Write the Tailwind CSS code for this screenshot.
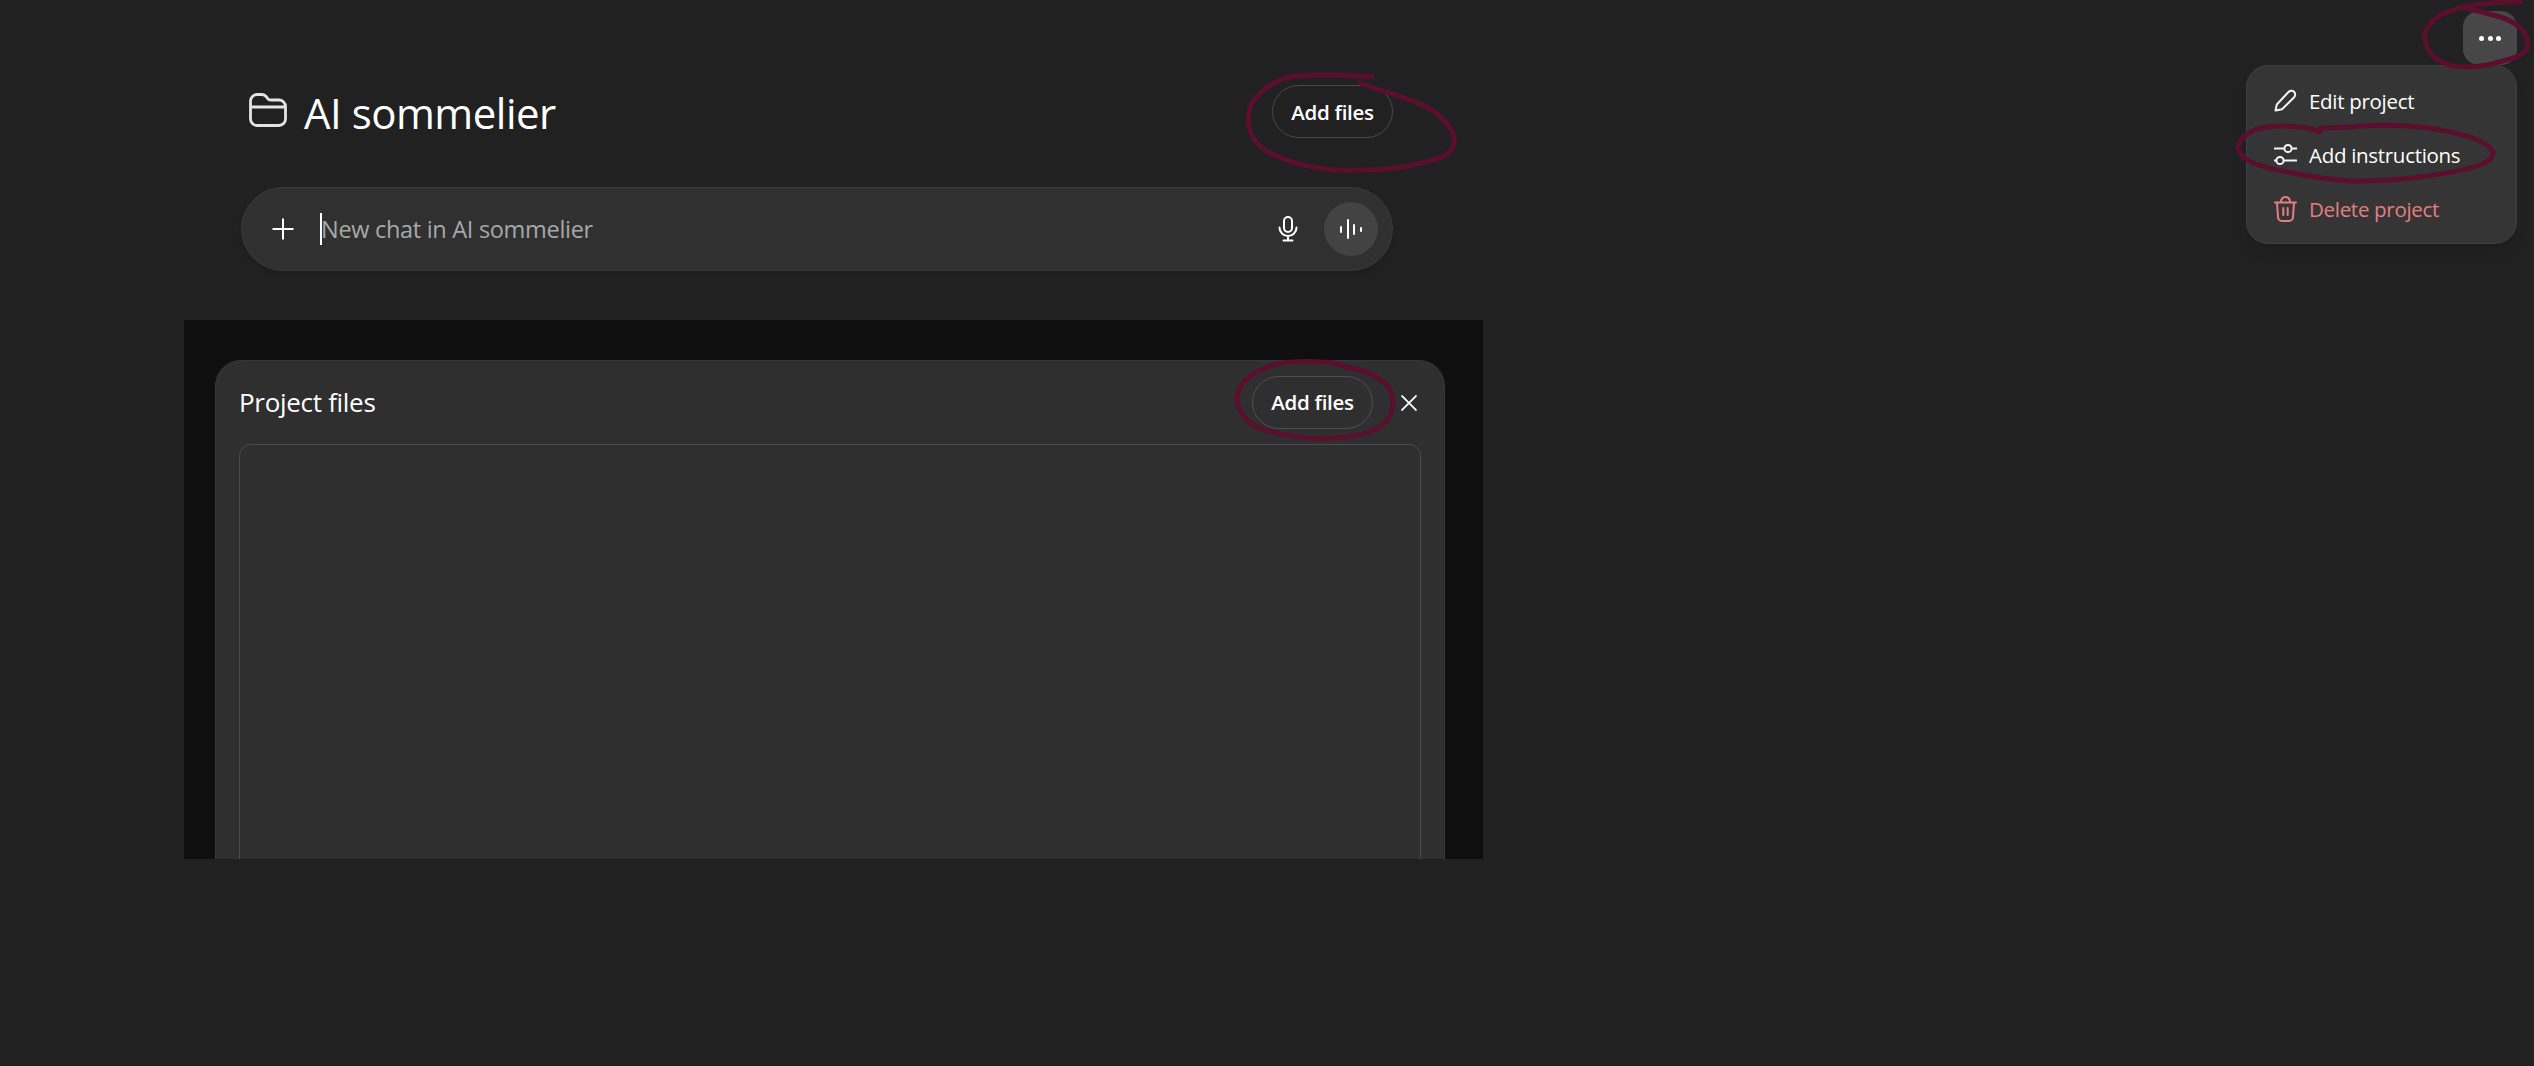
<!DOCTYPE html>
<html lang="en">
<head>
  <meta charset="UTF-8" />
  <title>AI sommelier</title>
  <script src="https://cdn.jsdelivr.net/npm/@tailwindcss/browser@4"></script>
</head>
<body class="bg-[#212121] text-white font-['Open_Sans',sans-serif] overflow-hidden">
  <div class="relative h-[1066px] w-[2534px]">
    <!-- Top right menu -->
    <button class="absolute left-[2463px] top-[11px] w-[54px] h-[54px] rounded-2xl bg-[#474747] flex items-center justify-center gap-[3.5px]">
      <span class="w-[5px] h-[5px] rounded-full bg-white"></span>
      <span class="w-[5px] h-[5px] rounded-full bg-white"></span>
      <span class="w-[5px] h-[5px] rounded-full bg-white"></span>
    </button>
    <div class="absolute left-[2246px] top-[65px] w-[271px] h-[179px] rounded-[22px] bg-[#353535] border border-[#404040] shadow-lg flex flex-col justify-center gap-[21px] pl-[27px] text-[20.5px] tracking-[-0.3px]">
      <div class="flex items-center gap-[12px] h-[33px]">
        <svg class="w-[23px] h-[23px]" viewBox="0 0 23 23" fill="none" stroke="#f5f5f5" stroke-width="2" stroke-linejoin="round"><path d="M1.500 21.500 2.800 15.500 14 3.500C15.800 1.500 18.500 1.300 20 2.800 21.700 4.400 21.500 7 19.700 8.800L8 20.300Z"/></svg>
        <span class="pt-[1px]">Edit project</span>
      </div>
      <div class="flex items-center gap-[12px] h-[33px]">
        <svg class="w-[23px] h-[23px]" viewBox="0 0 23 23" fill="none" stroke="#f5f5f5" stroke-width="2"><path d="M0 5.500h10M18 5.500h5M0 17.500h2M10 17.500h13"/><circle cx="14" cy="5.500" r="3.600"/><circle cx="6" cy="17.500" r="3.600"/></svg>
        <span class="pt-[1px]">Add instructions</span>
      </div>
      <div class="flex items-center gap-[12px] h-[33px] text-[#e57f7f]">
        <svg class="w-[23px] h-[26px]" viewBox="0 0 23 26" fill="none" stroke="#e57f7f" stroke-width="2" stroke-linejoin="round" stroke-linecap="round"><path d="M1 6.500h21M7 6.500C7 3 8.800 1 11.500 1S16 3 16 6.500M3 6.500l1 14.500a4 4 0 0 0 4 4h7a4 4 0 0 0 4-4l1-14.500M9.300 12v7M13.700 12v7"/></svg>
        <span class="pt-[1px]">Delete project</span>
      </div>
    </div>

    <!-- Main column -->
    <main class="pt-[85px] pl-[241px] w-[1393px]">
      <div class="flex items-center justify-between h-[53px]">
        <h1 class="flex items-center gap-[17px] pl-[8px] text-[42px] font-normal text-white tracking-[-0.5px]">
          <svg class="w-[38px] h-[34px] -mt-[3px]" viewBox="0 0 38 34" fill="none" stroke="#e4e4e4" stroke-width="2.800" stroke-linejoin="round"><path d="M1.500 26V8A6.500 6.500 0 0 1 8 1.500h5c2 0 3.200.8 4.300 2.200l1.200 1.600c.8 1 1.700 1.700 3 1.700H30a6.500 6.500 0 0 1 6.500 6.500V26a6.500 6.500 0 0 1-6.500 6.500H8A6.500 6.500 0 0 1 1.500 26Z"/><path d="M1.500 14h35"/></svg>
          <span class="pt-[2px]">AI sommelier</span>
        </h1>
        <button class="w-[121px] h-[53px] pt-[1px] rounded-full border border-[#4a4a4a] text-[20.5px] font-semibold tracking-[-0.3px]">Add files</button>
      </div>

      <div class="mt-[49px] h-[84px] rounded-[42px] bg-[#303030] border border-[#3a3a3a] shadow-md flex items-center pl-[29px] pr-[14px]">
        <svg class="w-[24px] h-[24px]" viewBox="0 0 24 24" fill="none" stroke="white" stroke-width="2"><path d="M12 1.500v21M1.500 12h21"/></svg>
        <span class="ml-[25px] w-[2px] h-[32px] bg-white"></span>
        <span class="-ml-[1px] pt-[2px] text-[23.5px] text-[#a8a8a8] tracking-[-0.3px]">New chat in AI sommelier</span>
        <svg class="ml-auto w-[22px] h-[26px]" viewBox="0 0 22 26" fill="none" stroke="white" stroke-width="2" stroke-linecap="round"><rect x="7" y="1" width="8" height="15" rx="4"/><path d="M2.500 11.500a8.500 8.500 0 0 0 17 0M11 20v4.500M6.500 24.500h9"/></svg>
        <button class="ml-[25px] w-[54px] h-[54px] rounded-full bg-[#434343] flex items-center justify-center gap-[4.4px]">
          <span class="w-[2px] h-[7px] bg-white rounded-full"></span>
          <span class="w-[2px] h-[20px] bg-white rounded-full"></span>
          <span class="w-[2px] h-[11px] bg-white rounded-full"></span>
          <span class="w-[2px] h-[5px] bg-white rounded-full"></span>
        </button>
      </div>

      <!-- Project files, cropped dialog -->
      <div class="mt-[49px] -ml-[57px] w-[1299px] h-[539px] bg-[#0f0f0f] overflow-hidden pt-[40px] pl-[31px]">
        <section class="w-[1230px] h-[600px] rounded-t-[26px] bg-[#2f2f2f] border border-[#383838] px-[23px]">
          <div class="h-[83px] flex items-center">
            <h2 class="text-[26px] font-normal tracking-[-0.3px]">Project files</h2>
            <button class="ml-auto w-[121px] h-[53px] rounded-full border border-[#4f4f4f] text-[20.5px] font-semibold tracking-[-0.3px]">Add files</button>
            <svg class="ml-[28px] mr-[4px] w-[16px] h-[16px]" viewBox="0 0 16 16" fill="none" stroke="white" stroke-width="1.800"><path d="M.5.500l15 15M15.500.500l-15 15"/></svg>
          </div>
          <div class="h-[500px] rounded-t-xl border border-[#4c4c4c]"></div>
        </section>
      </div>
    </main>

    <!-- Pen marks drawn on the screenshot -->
    <svg class="absolute inset-0 pointer-events-none" width="2534" height="1066" viewBox="0 0 2534 1066" fill="none" stroke="#5a0f2e" stroke-width="5" stroke-linecap="round" stroke-linejoin="round">
      <path d="M1372 77C1350 75 1320 74 1297 76C1280 77 1262 88 1252 103C1248 112 1247 122 1250 130C1253 142 1262 149 1270 153C1285 160 1300 165 1313 167C1330 170 1345 171 1357 170C1380 170 1400 168 1413 165C1430 161 1443 158 1450 152C1455 146 1455 138 1453 133C1447 122 1438 113 1427 107C1405 97 1380 91 1360 83"/>
      <path d="M1348 368C1340 364 1332 362 1323 362C1305 361 1288 361 1273 365C1258 370 1248 376 1243 383C1238 390 1236 397 1237 403C1240 413 1246 420 1253 425C1263 430 1275 433 1287 435C1303 438 1318 439 1333 438C1347 437 1358 436 1367 433C1380 428 1390 420 1392 410C1394 402 1392 392 1387 385C1380 378 1370 373 1360 370L1347 367"/>
      <path d="M2520 2C2505 2 2488 3 2473 5C2460 7 2449 11 2440 15C2433 20 2427 26 2425 33C2424 41 2427 49 2432 55C2438 61 2445 64 2453 66C2465 67 2477 67 2487 65C2500 62 2512 59 2520 55C2525 52 2528 47 2528 42C2526 35 2522 29 2517 25C2510 20 2502 17 2493 15C2486 13 2479 11 2473 10L2466 8"/>
      <path d="M2320 132C2308 127 2295 126 2283 126C2268 126 2257 128 2250 132C2243 137 2238 142 2238 148C2240 155 2246 160 2253 163C2266 168 2280 171 2293 173C2313 177 2333 180 2353 181C2376 181 2398 180 2420 177C2442 174 2465 170 2480 165C2488 162 2493 157 2493 152C2490 146 2483 142 2473 138C2457 133 2438 129 2420 127C2401 125 2382 125 2363 126C2348 127 2333 128 2320 128"/>
    </svg>
  </div>
</body>
</html>
